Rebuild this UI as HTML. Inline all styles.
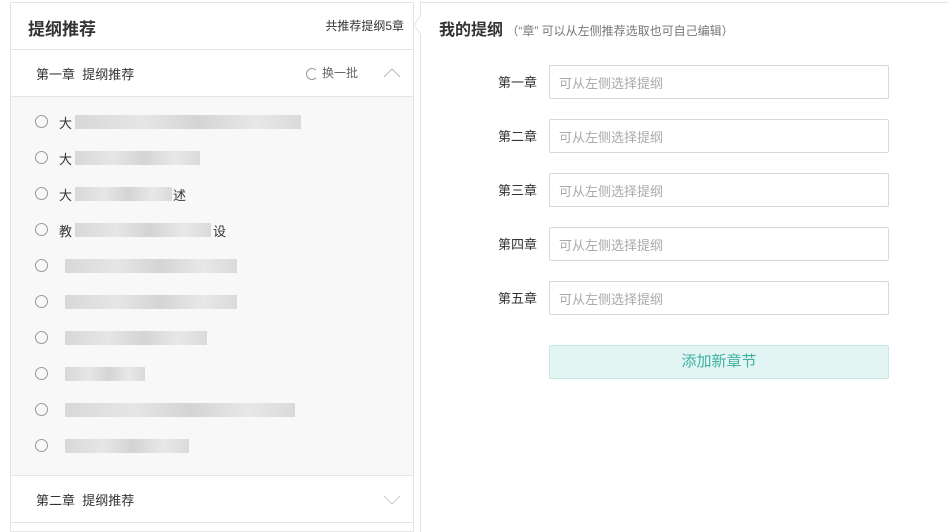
<!DOCTYPE html>
<html><head><meta charset="utf-8"><style>
*{margin:0;padding:0;box-sizing:border-box}
body{width:948px;height:527px;background:#fff;font-family:"Liberation Sans","Noto Sans CJK SC",sans-serif;position:relative;overflow:hidden;color:#333}
.abs{position:absolute}
.lp{left:10px;top:2px;width:404px;height:530px;border:1px solid #e4e4e4;background:#fff}
.row{position:absolute;left:0;width:402px;border-bottom:1px solid #e4e4e4}
.item{position:absolute;left:24px;height:16px}
.rad{position:absolute;left:0;top:0;width:13px;height:13px;border:1px solid #999;border-radius:50%}
.bar{position:absolute;top:0;height:14px;background:linear-gradient(90deg,#d8d8d8,#e6e6e6 30%,#d4d4d4 55%,#e8e8e8 80%,#dadada)}
.ch{position:absolute;font-size:13px;color:#333}
.lab{position:absolute;left:480px;width:57px;text-align:right;font-size:13px;color:#333}
.inp{position:absolute;left:549px;width:340px;height:34px;border:1px solid #d9d9d9;border-radius:2px;font-size:13px;color:#aaa;padding:7px 9px}
</style></head><body>
<div class="abs lp">
 <div class="row" style="top:0;height:47px"><div class="abs" style="left:17px;top:12px;font-size:17px;font-weight:bold;color:#333">提纲推荐</div><div class="abs" style="right:9px;top:14px;font-size:12px;color:#333">共推荐提纲5章</div></div>
 <div class="row" style="top:47px;height:47px"><div class="ch" style="left:25px;top:14px">第一章&nbsp;&nbsp;提纲推荐</div>
  <div class="abs" style="left:295px;top:18px;width:12px;height:12px;border:1px solid #999;border-radius:50%;border-right-color:transparent"></div>
  <div class="abs" style="left:311px;top:14px;font-size:12px;color:#666">换一批</div>
  <svg class="abs" style="left:372px;top:18px" width="18" height="10"><path d="M1 9L9 1L17 9" stroke="#bbb" fill="none"/></svg></div>
 <div class="row" style="top:94px;height:379px;background:#f8f8f8"></div>
 <div class="row" style="top:473px;height:47px"><div class="ch" style="left:25px;top:14px">第二章&nbsp;&nbsp;提纲推荐</div>
  <svg class="abs" style="left:372px;top:19px" width="18" height="10"><path d="M1 1L9 9L17 1" stroke="#ccc" fill="none"/></svg></div>
</div>
<div class="abs" style="left:11px;top:94px;width:402px;height:380px">
 <div class="item" style="top:21px"><div class="rad"></div><span class="abs" style="left:24px;top:-2px;font-size:13px">大</span><div class="bar" style="left:40px;width:226px"></div></div>
 <div class="item" style="top:57px"><div class="rad"></div><span class="abs" style="left:24px;top:-2px;font-size:13px">大</span><div class="bar" style="left:40px;width:125px"></div></div>
 <div class="item" style="top:93px"><div class="rad"></div><span class="abs" style="left:24px;top:-2px;font-size:13px">大</span><div class="bar" style="left:40px;width:97px"></div><span class="abs" style="left:138px;top:-2px;font-size:13px">述</span></div>
 <div class="item" style="top:129px"><div class="rad"></div><span class="abs" style="left:24px;top:-2px;font-size:13px">教</span><div class="bar" style="left:40px;width:136px"></div><span class="abs" style="left:178px;top:-2px;font-size:13px">设</span></div>
 <div class="item" style="top:165px"><div class="rad"></div><div class="bar" style="left:30px;width:172px"></div></div>
 <div class="item" style="top:201px"><div class="rad"></div><div class="bar" style="left:30px;width:172px"></div></div>
 <div class="item" style="top:237px"><div class="rad"></div><div class="bar" style="left:30px;width:142px"></div></div>
 <div class="item" style="top:273px"><div class="rad"></div><div class="bar" style="left:30px;width:80px"></div></div>
 <div class="item" style="top:309px"><div class="rad"></div><div class="bar" style="left:30px;width:230px"></div></div>
 <div class="item" style="top:345px"><div class="rad"></div><div class="bar" style="left:30px;width:124px"></div></div>
</div>
<div class="abs" style="left:420px;top:2px;width:530px;height:530px;border-left:1px solid #e4e4e4;border-top:1px solid #e4e4e4"></div>
<svg class="abs" style="left:413px;top:15px" width="10" height="20"><path d="M8 0L1 10L8 20" fill="#fff" stroke="#e4e4e4"/><rect x="8" y="0" width="2" height="20" fill="#fff"/></svg>
<div class="abs" style="left:439px;top:16px;font-size:16px;font-weight:bold;color:#333">我的提纲<span style="font-size:12px;font-weight:normal;color:#777"> （“章” 可以从左侧推荐选取也可自己编辑）</span></div>
<div class="lab" style="top:72px">第一章</div><div class="inp" style="top:65px">可从左侧选择提纲</div>
<div class="lab" style="top:126px">第二章</div><div class="inp" style="top:119px">可从左侧选择提纲</div>
<div class="lab" style="top:180px">第三章</div><div class="inp" style="top:173px">可从左侧选择提纲</div>
<div class="lab" style="top:234px">第四章</div><div class="inp" style="top:227px">可从左侧选择提纲</div>
<div class="lab" style="top:288px">第五章</div><div class="inp" style="top:281px">可从左侧选择提纲</div>
<div class="abs" style="left:549px;top:345px;width:340px;height:34px;background:#e2f5f3;border:1px solid #c5e9e4;border-radius:2px;text-align:center;line-height:32px;font-size:15px;color:#3fb1a4">添加新章节</div>
</body></html>
